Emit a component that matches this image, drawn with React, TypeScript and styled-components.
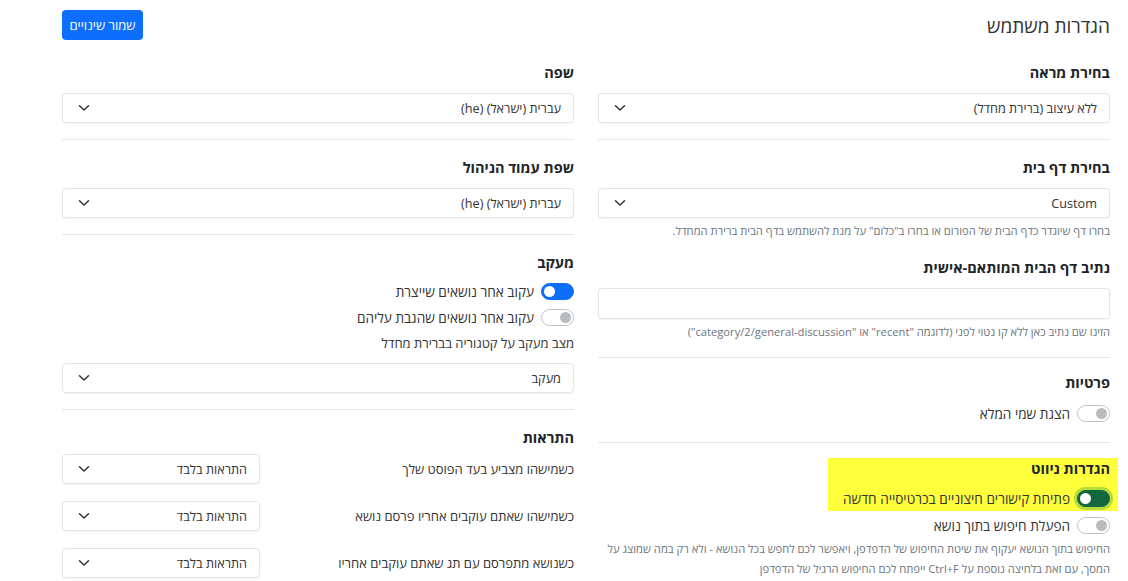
import React from "react";
import styled, { createGlobalStyle, css } from "styled-components";

const GlobalStyle = createGlobalStyle`
  html, body { margin: 0; padding: 0; background: #fff; }
  body {
    font-family: "Open Sans", "Noto Sans", "DejaVu Sans", sans-serif;
    color: #212529;
    direction: rtl;
  }
  * { box-sizing: border-box; }
`;

const Page = styled.div`
  direction: rtl;
  padding: 10px 18px 0 62px;
  width: 1128px;
  height: 581px;
  overflow: hidden;
`;

const Header = styled.div`
  display: flex;
  justify-content: space-between;
  align-items: center;
  height: 30px;
`;

const Title = styled.h1`
  margin: 0;
  font-size: 19px;
  font-weight: 400;
  color: #333;
  line-height: 30px;
  padding-top: 2px;
`;

const SaveButton = styled.button`
  background: #0d6efd;
  color: #fff;
  border: none;
  border-radius: 4px;
  height: 30px;
  width: 81px;
  padding: 0;
  font-family: inherit;
  font-size: 13px;
`;

const Columns = styled.div`
  display: grid;
  grid-template-columns: 1fr 1fr;
  column-gap: 24px;
  margin-top: 23px;
`;

const Column = styled.div`
  display: flex;
  flex-direction: column;
`;

const Section = styled.div<{ $last?: boolean; $pb?: number; $mb?: number }>`
  display: flex;
  flex-direction: column;
  padding: 0 0 ${(p) => p.$pb ?? 16}px;
  margin-bottom: ${(p) => p.$mb ?? 18}px;
  border-bottom: ${(p) => (p.$last ? "none" : "1px solid #e5e7ea")};
`;

const Heading = styled.h2<{ $mt?: number; $mb?: number }>`
  margin: ${(p) => p.$mt ?? 0}px 0 ${(p) => p.$mb ?? 10}px;
  font-size: 14.5px;
  font-weight: 700;
  line-height: 20px;
  color: #212529;
`;

const SelectBox = styled.div<{ $width?: number }>`
  display: flex;
  align-items: center;
  justify-content: space-between;
  height: 30px;
  width: ${(p) => (p.$width ? `${p.$width}px` : "100%")};
  border: 1px solid #e2e5e8;
  border-radius: 4px;
  box-shadow: 0 1px 2px rgba(0, 0, 0, 0.05);
  padding: 0 12px 0 15px;
  font-size: 12.7px;
  color: #333;
  background: #fff;
  flex-shrink: 0;
`;

const InputBox = styled.div`
  height: 31px;
  border: 1px solid #e2e5e8;
  border-radius: 4px;
  box-shadow: 0 1px 2px rgba(0, 0, 0, 0.05);
`;

const Help = styled.div<{ $mt?: number }>`
  margin-top: ${(p) => p.$mt ?? 3}px;
  font-size: 11.2px;
  line-height: 20px;
  color: #6c757d;
`;

const ToggleRow = styled.div<{ $mt?: number }>`
  display: flex;
  align-items: center;
  gap: 7px;
  height: 20px;
  margin-top: ${(p) => p.$mt ?? 0}px;
  font-size: 13.6px;
  color: #333;
`;

const Switch = styled.span<{ $on?: boolean; $variant?: "blue" | "green" }>`
  position: relative;
  display: inline-block;
  width: 33px;
  height: 17px;
  border-radius: 9px;
  border: 1px solid #bfc3c7;
  background: #fff;
  flex-shrink: 0;
  &::after {
    content: "";
    position: absolute;
    top: 2px;
    right: 2px;
    width: 11px;
    height: 11px;
    border-radius: 50%;
    background: #b8bbbe;
  }
  ${(p) =>
    p.$on &&
    css`
      border-color: ${p.$variant === "green" ? "#13673d" : "#0d6efd"};
      background: ${p.$variant === "green" ? "#13673d" : "#0d6efd"};
      &::after {
        right: auto;
        left: 2px;
        background: #fff;
      }
    `}
  ${(p) =>
    p.$variant === "green" &&
    css`
      box-shadow: 0 0 0 3px rgba(120, 190, 60, 0.55);
    `}
`;

const Label = styled.div<{ $mt?: number }>`
  margin-top: ${(p) => p.$mt ?? 0}px;
  font-size: 13px;
  line-height: 20px;
  color: #333;
`;

const Highlight = styled.div`
  align-self: flex-start;
  background: #ffff3c;
  margin-right: -8px;
  padding: 1px 8px 3px 15px;
`;

const NotifRow = styled.div`
  display: flex;
  justify-content: space-between;
  align-items: center;
  margin-bottom: 17px;
`;

const Spacer = styled.div<{ $h: number }>`
  height: ${(p) => p.$h}px;
`;

const Chevron = () => (
  <svg width="12" height="8" viewBox="0 0 12 8" fill="none">
    <path d="M1.5 1.8 L6 6 L10.5 1.8" stroke="#333" strokeWidth="1.5" strokeLinecap="round" strokeLinejoin="round" />
  </svg>
);

const Select = ({ value, width }: { value: string; width?: number }) => (
  <SelectBox $width={width}>
    <span>{value}</span>
    <Chevron />
  </SelectBox>
);

export default function App() {
  return (
    <>
      <GlobalStyle />
      <Page>
        <Header>
          <Title>הגדרות משתמש</Title>
          <SaveButton>שמור שינויים</SaveButton>
        </Header>
        <Columns>
          <Column>
            <Section>
              <Heading>בחירת מראה</Heading>
              <Select value="ללא עיצוב (ברירת מחדל)" />
            </Section>
            <Section $pb={15} $mb={15}>
              <Heading>בחירת דף בית</Heading>
              <Select value="Custom" />
              <Help>בחרו דף שיוגדר כדף הבית של הפורום או בחרו ב"כלום" על מנת להשתמש בדף הבית ברירת המחדל.</Help>
              <Heading $mt={17}>נתיב דף הבית המותאם-אישית</Heading>
              <InputBox />
              <Help>הזינו שם נתיב כאן ללא קו נטוי לפני (לדוגמה "recent" או "category/2/general-discussion")</Help>
            </Section>
            <Section $pb={19} $mb={15}>
              <Heading>פרטיות</Heading>
              <ToggleRow>
                <Switch />
                <span>הצגת שמי המלא</span>
              </ToggleRow>
            </Section>
            <Section $last>
              <Highlight>
                <Heading $mb={9}>הגדרות ניווט</Heading>
                <ToggleRow>
                  <Switch $on $variant="green" />
                  <span>פתיחת קישורים חיצוניים בכרטיסייה חדשה</span>
                </ToggleRow>
              </Highlight>
              <ToggleRow $mt={4}>
                <Switch />
                <span>הפעלת חיפוש בתוך נושא</span>
              </ToggleRow>
              <Help $mt={4}>
                החיפוש בתוך הנושא יעקוף את שיטת החיפוש של הדפדפן, ויאפשר לכם לחפש בכל הנושא - ולא רק במה שמוצג על המסך, עם זאת בלחיצה נוספת על Ctrl+F ייפתח לכם החיפוש הרגיל של הדפדפן
              </Help>
            </Section>
          </Column>
          <Column>
            <Section>
              <Heading>שפה</Heading>
              <Select value="עברית (ישראל) (he)" />
            </Section>
            <Section>
              <Heading>שפת עמוד הניהול</Heading>
              <Select value="עברית (ישראל) (he)" />
            </Section>
            <Section>
              <Heading>מעקב</Heading>
              <ToggleRow $mt={-2}>
                <Switch $on $variant="blue" />
                <span>עקוב אחר נושאים שייצרת</span>
              </ToggleRow>
              <ToggleRow $mt={6}>
                <Switch />
                <span>עקוב אחר נושאים שהגבת עליהם</span>
              </ToggleRow>
              <Label $mt={6}>מצב מעקב על קטגוריה בברירת מחדל</Label>
              <Spacer $h={10} />
              <Select value="מעקב" />
            </Section>
            <Section $last>
              <Heading $mb={6}>התראות</Heading>
              <NotifRow>
                <Label>כשמישהו מצביע בעד הפוסט שלך</Label>
                <Select value="התראות בלבד" width={198} />
              </NotifRow>
              <NotifRow>
                <Label>כשמישהו שאתם עוקבים אחריו פרסם נושא</Label>
                <Select value="התראות בלבד" width={198} />
              </NotifRow>
              <NotifRow>
                <Label>כשנושא מתפרסם עם תג שאתם עוקבים אחריו</Label>
                <Select value="התראות בלבד" width={198} />
              </NotifRow>
            </Section>
          </Column>
        </Columns>
      </Page>
    </>
  );
}
